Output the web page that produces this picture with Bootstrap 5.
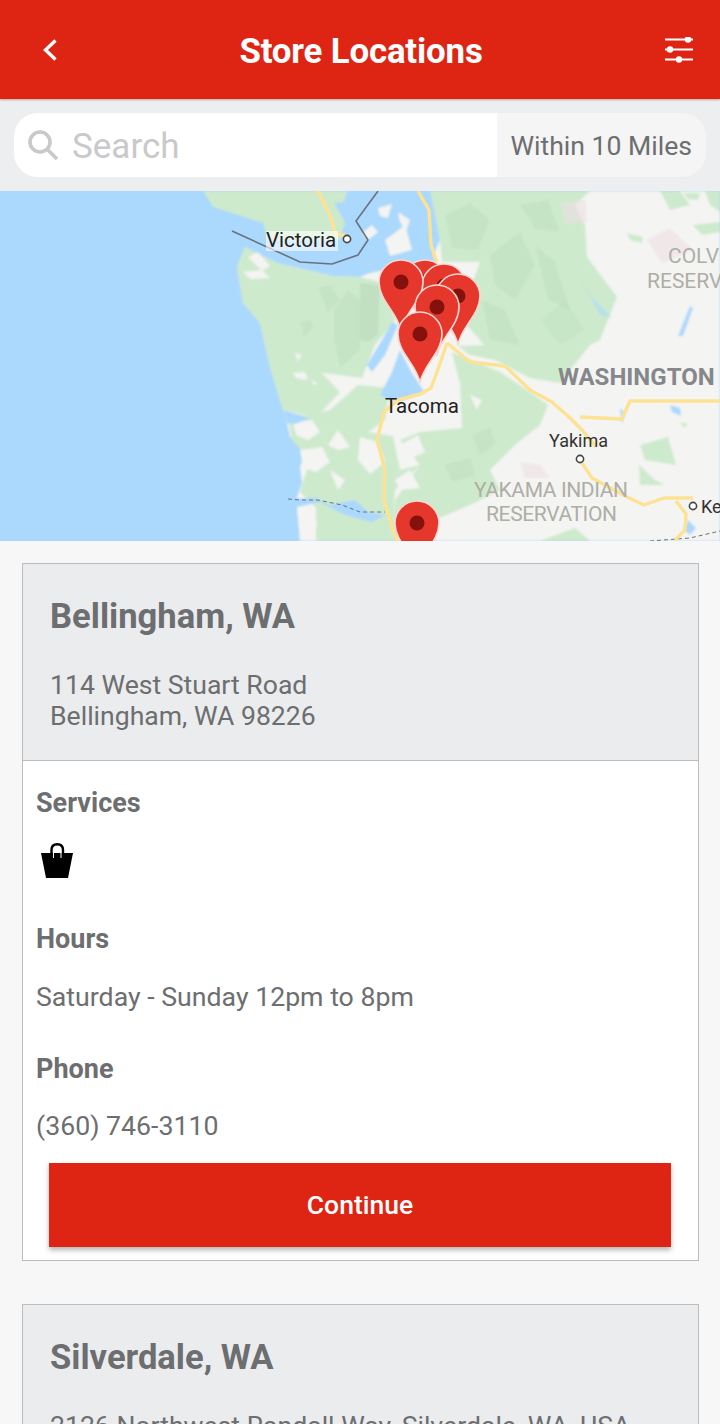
<!DOCTYPE html>
<html lang="en">

<head>
    <meta charset="UTF-8" />
    <meta name="viewport" content="width=device-width, initial-scale=1" />
    <title>Store Locations</title>
    <link href="https://cdn.jsdelivr.net/npm/bootstrap@5.3.3/dist/css/bootstrap.min.css" rel="stylesheet" />
    <style>
        html, body { height: 100%; }

        body {
            background: #f7f7f7;
            color: #6c6e70;
            font-family: Roboto, "Liberation Sans", sans-serif;
            overflow: hidden;
        }

        .app-screen { height: 1424px; overflow: hidden; }

        .top-bar {
            background: #de2514;
            height: 99px;
            padding: 0 27px 0 43px;
            box-shadow: 0 1px 2px rgba(120, 30, 20, .35);
            position: relative;
        }

        .top-title {
            color: #fff;
            font-size: 34.8px;
            font-weight: 700;
            letter-spacing: -.15px;
            line-height: 1;
            margin: 3px 0 0;
        }

        .search-wrap { background: #eceef0; padding: 14px 14px; height: 92px; }

        .search-pill {
            border-radius: 24px;
            background: #f5f5f5;
            height: 64px;
            overflow: hidden;
        }

        .search-input-box { background: #fff; width: 483px; padding-left: 14px; gap: 14px; }
        .search-input-box span { color: #c9c9c9; font-size: 35px; padding-top: 4px; }
        .search-range { font-size: 26.6px; padding-right: 14px; padding-top: 2px; }

        .map-box { display: block; width: 720px; height: 350px; }
        .map-box text { font-family: Roboto, "Liberation Sans", sans-serif; }

        .store-list { padding: 22px 21px 0 22px; }

        .store-card {
            border: 1px solid #bdbdbd;
            border-radius: 0;
            background: #fff;
            margin-bottom: 43px;
        }

        .store-head {
            background: #ebecee;
            border: 0;
            border-bottom: 1px solid #bdbdbd;
            border-radius: 0 !important;
            padding: 27px 27px 29px;
            height: 197px;
        }

        .store-name { color: #6c6e70; font-size: 34.6px; font-weight: 700; line-height: 50px; margin-bottom: 28px; }
        .store-addr { font-size: 26.6px; line-height: 31px; margin: 0; }

        .store-body { padding: 26px 13px 12px; height: 499px; }
        .info-title { font-size: 27px; font-weight: 700; line-height: 32px; margin: 0; }
        .info-text { font-size: 26.7px; line-height: 32px; margin: 0; }
        .bag-icon { margin: 24px 0 45px 5px; }
        .gap-hours { margin-top: 26px; }
        .gap-phone { margin-top: 40px; }
        .gap-tel { margin-top: 25px; }

        .go-btn {
            background: #de2514;
            border: 0;
            border-radius: 0;
            color: #fff;
            font-size: 26.5px;
            font-weight: 500;
            height: 84px;
            width: 622px;
            margin: 21px 0 0 13px;
            box-shadow: 0 3px 5px rgba(0, 0, 0, .3);
        }
    </style>
</head>

<body>
    <div class="app-screen">
        <nav class="top-bar d-flex align-items-center justify-content-between">
            <svg width="14" height="22" viewBox="0 0 14 22" fill="none" stroke="#fff" stroke-width="3.4">
                <path d="M12.5 1.5 2.5 11l10 9.5" />
            </svg>
            <h1 class="top-title">Store Locations</h1>
            <svg width="28" height="26" viewBox="0 0 28 26" fill="#fff" stroke="#fff">
                <path d="M0 2.5h28M0 12.5h28M0 22.5h28" stroke-width="2" />
                <circle cx="23" cy="2.5" r="3.2" stroke="none" />
                <circle cx="5" cy="12.5" r="3.2" stroke="none" />
                <circle cx="14" cy="22.5" r="3.2" stroke="none" />
            </svg>
        </nav>

        <div class="search-wrap">
            <div class="search-pill d-flex">
                <div class="search-input-box d-flex align-items-center">
                    <svg width="30" height="30" viewBox="0 0 30 30" fill="none" stroke="#c9c9c9" stroke-width="3.6">
                        <circle cx="12" cy="12" r="10" />
                        <path d="m19 19 10 10" />
                    </svg>
                    <span>Search</span>
                </div>
                <div class="search-range flex-grow-1 d-flex align-items-center justify-content-end">Within 10 Miles</div>
            </div>
        </div>

        <svg class="map-box" viewBox="0 191 720 350" xmlns="http://www.w3.org/2000/svg">
            <defs>
                <g id="pin">
                    <path d="M0 49C-3 31-22 19-22 0A22 22 0 1 1 22 0C22 19 3 31 0 49Z" fill="#e5372b" stroke="#f7d9d2" stroke-width="1.6" />
                    <circle r="7.5" fill="#85110c" />
                </g>
                <filter id="soft"><feGaussianBlur stdDeviation="0.8" /></filter>
            </defs>
            <rect x="0" y="191" width="720" height="350" fill="#abd8fd" />
            <g filter="url(#soft)">
                <!-- land base -->
                <path d="M245 247 277 263 333 276 360 277 372 272 400 265 430 262 440 240 432 191H720V541H300L297 507 297 497 302 483 300 467 307 447 290 437 287 423 283 410 270 367 260 323 243 303 237 267Z" fill="#f4f4f2" />
                <!-- vancouver island tip -->
                <path d="M203 191 213 207 263 223 268 240 340 240 345 222 335 205 338 191Z" fill="#cdeacd" />
                <path d="M333 191H347L344 202 336 203Z" fill="#cdeacd" />
                <!-- olympic peninsula -->
                <path d="M245 247 277 263 333 276 360 277 384 283 395 320 375 345 362 378 322 373 340 392 316 418 283 410 270 367 260 323 243 303 237 267Z" fill="#cdeacd" />
                <path d="M248 257 258 252 270 266 262 271ZM243 272 262 270 270 278 250 279ZM295 353 302 355 298 361ZM293 373 305 372 308 380 296 378ZM312 380 317 383 314 386Z" fill="#f4f4f2" />
                <!-- southwest, green with white cuts -->
                <path d="M288 420 330 410 358 385 390 388 385 420 368 432 393 436 400 470 420 465 395 490 392 541H316L316 508 300 492 310 460 292 440Z" fill="#cdeacd" />
                <path d="M293 423 312 420 320 432 308 440 296 435ZM300 450 322 447 330 462 316 472 303 468ZM328 445 338 430 350 447 338 450ZM322 373 340 392 358 378ZM330 470 345 480 338 490ZM360 437 378 442 385 462 370 474 358 460ZM297 507 315 511 317 525 312 541H300Z" fill="#f4f4f2" />
                <!-- south cascades -->
                <path d="M452 352 500 372 530 392 548 405 540 425 515 445 490 470 500 490 470 505 430 522 436 541H392L395 500 420 465 400 440 420 432 462 428 460 385Z" fill="#cdeacd" />
                <path d="M400 445 418 435 425 452 408 460ZM395 480 410 470 420 488 400 490ZM470 395 482 400 477 410ZM427 385 460 382 460 422 438 425Z" fill="#f4f4f2" />
                <path d="M472 435 490 428 496 444 480 455ZM445 465 470 458 475 475 452 482Z" fill="#bfdcbf" opacity=".5" />
                <path d="M360 283 380 285 378 335 368 342 360 340Z" fill="#bcdcbd" opacity=".7" />
                <path d="M318 288 330 285 340 300 328 312ZM334 310 348 290 360 300 360 350 340 368 334 340ZM302 330 312 323 314 326 304 338ZM300 323 310 320 312 326 303 328Z" fill="#bcdcbd" opacity=".45" />
                <!-- north cascades -->
                <path d="M430 191H590L575 205 585 225 587 257 617 297 600 340 590 345 560 383 530 378 495 360 470 355 458 346 484 345 460 317 480 262 442 262 440 240Z" fill="#cdeacd" />
                <path d="M445 215 470 203 490 220 478 250 452 248ZM490 255 520 232 535 265 515 300 495 285ZM482 300 505 310 520 345 490 340ZM535 245 555 262 570 310 548 300ZM520 205 548 200 560 232 535 228Z" fill="#b9dbba" opacity=".38" />
                <path d="M540 320 565 300 585 330 560 345Z" fill="#b9dbba" opacity=".3" />
                <path d="M560 203 585 200 587 222 566 224ZM647 240 670 228 693 250 662 263Z" fill="#ecdde3" opacity=".6" />
                <path d="M627 233 643 237 642 243 630 240ZM693 225 720 222 720 232 702 235ZM684 193 700 193 698 200 688 199ZM660 191H680L690 205 670 210ZM705 191H720V212L710 205Z" fill="#cdeacd" />
                <path d="M640 445 668 437 676 465 645 460ZM639 465 655 480 665 485 640 485ZM680 422 688 424 684 428ZM540 541 575 528 590 541Z" fill="#cdeacd" />
                <path d="M520 462 540 465 550 478 525 478Z" fill="#ecdde3" opacity=".6" />
                <!-- water -->
                <path d="M378 191H412L418 215 436 262 405 265 385 270 360 275 340 270 348 240 355 191Z" fill="#abd8fd" />
                <path d="M367 365 382 340 392 322 398 325 385 355 372 372ZM380 395 392 372 400 350 410 370 425 393 398 402 385 398Z" fill="#abd8fd" />
                <path d="M378 208 392 204 388 218 380 216ZM362 233 372 225 378 232 368 240ZM385 240 405 225 412 250 390 256ZM398 212 410 220 406 232 400 222Z" fill="#f4f4f2" />
                <path d="M690 306 693 308 683 336 678 336ZM670 405 680 408 681 416 672 412ZM620 408 624 412 622 425Z" fill="#abd8fd" />
                <path d="M575 270 600 315 612 318 590 295Z" fill="#abd8fd" opacity=".6" />
                <path d="M283 410 310 418 295 424 287 423ZM288 499 316 498 330 505 355 500 368 512 385 515 372 522 345 515 320 502 297 507Z" fill="#abd8fd" />
                <path d="M688 520 696 528 690 535 684 530ZM290 467 297 467 297 490 292 487Z" fill="#abd8fd" />
            </g>
            <!-- borders -->
            <path d="M232 231 300 262 332 264 358 255 368 240 356 221 378 191" fill="none" stroke="#6a7280" stroke-width="1.6" />
            <path d="M288 499 300 500 318 500 342 505 360 512 385 512M650 541 690 538 720 531" fill="none" stroke="#6a7280" stroke-width="1" stroke-dasharray="4 3" />
            <!-- roads -->
            <g fill="none" stroke="#fde293" stroke-width="3.4" stroke-linejoin="round">
                <path d="M418 191 429 210 431 245 437 262" />
                <path d="M318 191 330 215 336 235 345 235" />
                <path d="M447 343 470 362 505 366 530 390 552 402 570 418 582 430 596 447" />
                <path d="M580 417 622 419 630 401 720 401" />
                <path d="M580 460 592 478 627 497 644 505 664 498 693 498" />
                <path d="M676 501 686 514 685 530 675 540" />
                <path d="M447 343 437 372 431 388 420 394 398 400 384 412 377 440 385 470 384 500 393 530 398 541" />
            </g>
            <!-- labels -->
            <rect x="266" y="231" width="72" height="20" fill="#fff" opacity=".6" />
            <text x="266" y="247" font-size="20.5" fill="#222">Victoria</text>
            <circle cx="347" cy="239" r="3.6" fill="#fff" stroke="#444" stroke-width="1.6" />
            <text x="385" y="413" font-size="20.5" fill="#222">Tacoma</text>
            <text x="558" y="385" font-size="24" font-weight="700" fill="#85878a">WASHINGTON</text>
            <text x="549" y="447" font-size="18" fill="#333">Yakima</text>
            <circle cx="580" cy="459" r="3.6" fill="#fff" stroke="#444" stroke-width="1.6" />
            <circle cx="693" cy="506" r="3.6" fill="#fff" stroke="#444" stroke-width="1.6" />
            <text x="701" y="513" font-size="18" fill="#333">Ke</text>
            <g font-size="21" fill="#aeaea6">
                <text x="668" y="263">COLV</text>
                <text x="647" y="288">RESERV</text>
                <text x="474" y="497" textLength="154">YAKAMA INDIAN</text>
                <text x="486" y="521" textLength="131">RESERVATION</text>
            </g>
            <!-- pins -->
            <use href="#pin" x="425" y="282" />
            <use href="#pin" x="444" y="286" />
            <use href="#pin" x="458" y="296" />
            <use href="#pin" x="401" y="282" />
            <use href="#pin" x="437" y="307" />
            <use href="#pin" x="420" y="334" />
            <use href="#pin" x="417" y="523" />
        </svg>

        <div class="store-list">
            <div class="card store-card">
                <div class="card-header store-head">
                    <h2 class="store-name">Bellingham, WA</h2>
                    <p class="store-addr">114 West Stuart Road<br />Bellingham, WA 98226</p>
                </div>
                <div class="card-body store-body">
                    <p class="info-title">Services</p>
                    <svg class="d-block bag-icon" width="33" height="35" viewBox="0 0 33 35">
                        <path d="M0 10H32L27 35H5Z" fill="#000" />
                        <path d="M10.5 16V7C10.5 3 13 1.2 16.2 1.2S22 3 22 7V16" fill="none" stroke="#000" stroke-width="2.4" />
                        <path d="M12.5 10V15M20 10V15" fill="none" stroke="#fff" stroke-width="1" />
                    </svg>
                    <p class="info-title">Hours</p>
                    <p class="info-text gap-hours">Saturday - Sunday 12pm to 8pm</p>
                    <p class="info-title gap-phone">Phone</p>
                    <p class="info-text gap-tel">(360) 746-3110</p>
                    <button class="btn go-btn d-block" type="button">Continue</button>
                </div>
            </div>

            <div class="card store-card">
                <div class="card-header store-head">
                    <h2 class="store-name">Silverdale, WA</h2>
                    <p class="store-addr">2126 Northwest Randall Way, Silverdale, WA, USA</p>
                </div>
            </div>
        </div>
    </div>

    <script src="https://cdn.jsdelivr.net/npm/bootstrap@5.3.3/dist/js/bootstrap.bundle.min.js"></script>
</body>

</html>
